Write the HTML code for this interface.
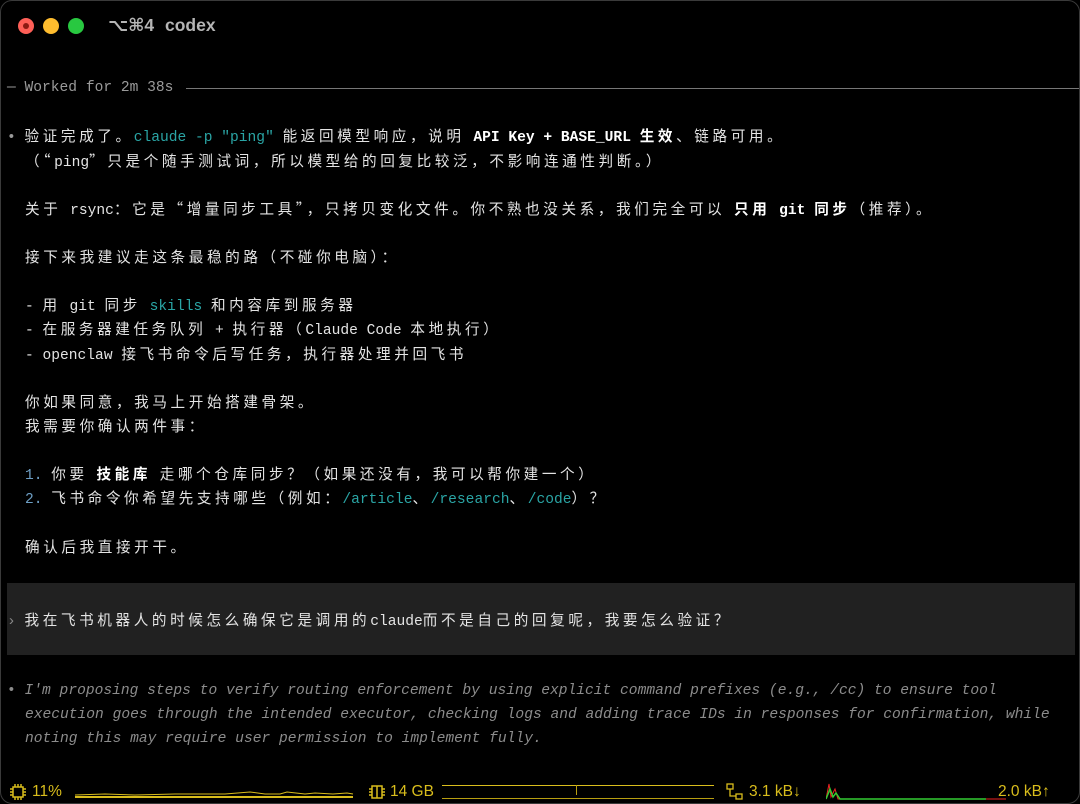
<!DOCTYPE html>
<html><head><meta charset="utf-8"><style>
html,body{margin:0;padding:0;background:#000;width:1080px;height:804px;overflow:hidden}
.win{position:absolute;left:0;top:0;width:1078px;height:802px;border:1px solid #3a3a3a;border-radius:12px;background:#000;overflow:hidden}
.l{position:absolute;left:24px;height:24px;line-height:24px;font-family:"Liberation Mono","Noto Sans CJK SC",monospace;font-size:14.6px;color:#e4e4e4;white-space:pre}
.c{letter-spacing:3.6px;font-family:"Noto Sans CJK SC","WenQuanYi Zen Hei",sans-serif}
.t{color:#2aa5a5}
.b{font-weight:bold;color:#fff}
.n{color:#6d9ec4}
.dot{position:absolute;top:17px;width:16px;height:16px;border-radius:50%}
.sb{position:absolute;top:781px;height:20px;line-height:20px;font-family:"Liberation Sans",sans-serif;font-size:15.5px;color:#d9bd1c;white-space:pre}
</style></head><body><div class="win">
<div class="dot" style="left:17px;background:#fe5f57"><div style="position:absolute;left:5px;top:5px;width:6px;height:6px;border-radius:50%;background:#8c1a12"></div></div>
<div class="dot" style="left:42px;background:#febc2e"></div>
<div class="dot" style="left:67px;background:#28c840"></div>
<div style="position:absolute;left:107px;top:14px;font-family:'Liberation Sans','DejaVu Sans',sans-serif;font-size:17.5px;font-weight:bold;color:#b5b5b5;white-space:pre;word-spacing:6px">⌥⌘4 codex</div>

<div class="l" style="left:6px;top:75px;color:#9a9a9a">— Worked for 2m 38s</div>
<div style="position:absolute;left:185px;top:87px;width:895px;height:1px;background:#777"></div>

<div class="l" style="left:6px;top:123px"><span style="color:#999">•</span> <span class="c">验证完成了。</span><span class="t">claude -p "ping"</span> <span class="c">能返回模型响应，说明</span> <span class="b">API Key + BASE_URL <span class="c">生效</span></span><span class="c">、链路可用。</span></div>
<div class="l" style="top:148px"><span class="c">（“</span>ping<span class="c">”只是个随手测试词，所以模型给的回复比较泛，不影响连通性判断。）</span></div>
<div class="l" style="top:196px"><span class="c">关于</span> rsync<span class="c">：它是“增量同步工具”，只拷贝变化文件。你不熟也没关系，我们完全可以</span> <span class="b"><span class="c">只用</span> git <span class="c">同步</span></span><span class="c">（推荐）。</span></div>
<div class="l" style="top:244px"><span class="c">接下来我建议走这条最稳的路（不碰你电脑）：</span></div>
<div class="l" style="top:292px">- <span class="c">用</span> git <span class="c">同步</span> <span class="t">skills</span> <span class="c">和内容库到服务器</span></div>
<div class="l" style="top:316px">- <span class="c">在服务器建任务队列</span> + <span class="c">执行器（</span>Claude Code <span class="c">本地执行）</span></div>
<div class="l" style="top:341px">- openclaw <span class="c">接飞书命令后写任务，执行器处理并回飞书</span></div>
<div class="l" style="top:389px"><span class="c">你如果同意，我马上开始搭建骨架。</span></div>
<div class="l" style="top:413px"><span class="c">我需要你确认两件事：</span></div>
<div class="l" style="top:461px"><span class="n">1.</span> <span class="c">你要</span> <span class="b c">技能库</span> <span class="c">走哪个仓库同步？（如果还没有，我可以帮你建一个）</span></div>
<div class="l" style="top:485px"><span class="n">2.</span> <span class="c">飞书命令你希望先支持哪些（例如：</span><span class="t">/article</span><span class="c">、</span><span class="t">/research</span><span class="c">、</span><span class="t">/code</span><span class="c">）？</span></div>
<div class="l" style="top:534px"><span class="c">确认后我直接开干。</span></div>

<div style="position:absolute;left:6px;top:582px;width:1068px;height:72px;background:#212121"></div>
<div class="l" style="left:6px;top:607px"><span style="color:#888">›</span> <span class="c">我在飞书机器人的时候怎么确保它是调用的</span>claude<span class="c">而不是自己的回复呢，我要怎么验证？</span></div>

<div class="l" style="left:6px;top:678px;color:#8c8c8c"><span>•</span> <i>I'm proposing steps to verify routing enforcement by using explicit command prefixes (e.g., /cc) to ensure tool</i></div>
<div class="l" style="top:702px;color:#8c8c8c"><i>execution goes through the intended executor, checking logs and adding trace IDs in responses for confirmation, while</i></div>
<div class="l" style="top:726px;color:#8c8c8c"><i>noting this may require user permission to implement fully.</i></div>

<svg style="position:absolute;left:8px;top:782px" width="18" height="18" viewBox="0 0 18 18" fill="none" stroke="#d9bd1c" stroke-width="1.5"><rect x="4" y="4" width="10" height="10"/><path d="M6 1v3M9 1v3M12 1v3M6 14v3M9 14v3M12 14v3M1 6h3M1 9h3M1 12h3M14 6h3M14 9h3M14 12h3"/></svg>
<div class="sb" style="left:31px">11%</div>
<svg style="position:absolute;left:74px;top:786px" width="280" height="14"><path d="M0 8 L30 7 L60 8 L100 7 L150 7 L175 5 L190 7 L205 7 L212 5 L230 7 L240 6 L258 7 L272 6 L278 7" stroke="#d9bd1c" fill="none" stroke-width="1"/><path d="M0 10H278" stroke="#d9bd1c" stroke-width="2"/></svg>
<svg style="position:absolute;left:367px;top:783px" width="18" height="16" fill="none" stroke="#d9bd1c" stroke-width="1.5"><rect x="4" y="2" width="10" height="12"/><path d="M1 5h3M1 8h3M1 11h3M14 5h3M14 8h3M14 11h3M9 2v12"/></svg>
<div class="sb" style="left:389px">14 GB</div>
<div style="position:absolute;left:441px;top:784px;width:272px;height:1px;background:#d9bd1c"></div>
<div style="position:absolute;left:441px;top:797px;width:272px;height:1px;background:#b89e10"></div>
<div style="position:absolute;left:575px;top:784px;width:1px;height:10px;background:#b89e10"></div>
<svg style="position:absolute;left:725px;top:782px" width="18" height="18" fill="none" stroke="#d9bd1c" stroke-width="1.3"><rect x="1" y="1" width="6" height="5"/><rect x="10" y="11" width="6" height="5"/><path d="M4 6v7h6"/></svg>
<div class="sb" style="left:748px">3.1 kB↓</div>
<svg style="position:absolute;left:825px;top:780px" width="180" height="20"><path d="M0 18 L3 3 L5 16 L9 8 L12 18 L180 18" stroke="#e22" fill="none" stroke-width="1"/><path d="M0 18 L4 8 L7 16 L10 12 L14 18 L160 18" stroke="#3c3" fill="none" stroke-width="1.5"/></svg>
<div class="sb" style="left:997px">2.0 kB↑</div>
</div></body></html>
